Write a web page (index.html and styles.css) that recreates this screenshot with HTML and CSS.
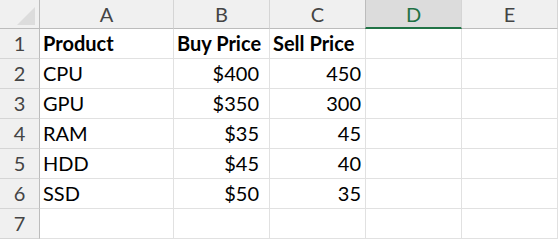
FILE: index.html
```html
<!DOCTYPE html>
<html lang="en">
<head>
  <meta charset="UTF-8">
  <title>Sheet1</title>
  <link rel="stylesheet" href="styles.css">
</head>
<body>
  <div class="sheet">
    <div class="corner"><span class="tri"></span></div>
    <div class="col-head">A</div>
    <div class="col-head">B</div>
    <div class="col-head">C</div>
    <div class="col-head selected">D</div>
    <div class="col-head">E</div>

    <div class="row-head">1</div>
    <div class="cell bold">Product</div>
    <div class="cell bold">Buy Price</div>
    <div class="cell bold">Sell Price</div>
    <div class="cell"></div>
    <div class="cell"></div>

    <div class="row-head">2</div>
    <div class="cell">CPU</div>
    <div class="cell money">$400</div>
    <div class="cell num">450</div>
    <div class="cell"></div>
    <div class="cell"></div>

    <div class="row-head">3</div>
    <div class="cell">GPU</div>
    <div class="cell money">$350</div>
    <div class="cell num">300</div>
    <div class="cell"></div>
    <div class="cell"></div>

    <div class="row-head">4</div>
    <div class="cell">RAM</div>
    <div class="cell money">$35</div>
    <div class="cell num">45</div>
    <div class="cell"></div>
    <div class="cell"></div>

    <div class="row-head">5</div>
    <div class="cell">HDD</div>
    <div class="cell money">$45</div>
    <div class="cell num">40</div>
    <div class="cell"></div>
    <div class="cell"></div>

    <div class="row-head">6</div>
    <div class="cell">SSD</div>
    <div class="cell money">$50</div>
    <div class="cell num">35</div>
    <div class="cell"></div>
    <div class="cell"></div>

    <div class="row-head">7</div>
    <div class="cell"></div>
    <div class="cell"></div>
    <div class="cell"></div>
    <div class="cell"></div>
    <div class="cell"></div>
  </div>
</body>
</html>
```

FILE: styles.css
```css
body {
  margin: 0;
  background-color: #ffffff;
  font-family: Lato, "Open Sans", sans-serif;
  font-size: 20px;
  color: #000;
}

.sheet {
  display: grid;
  grid-template-columns: 40px 134px 96px 96px 96px 96px;
  grid-template-rows: 29px repeat(7, 30px);
}

.sheet > div {
  box-sizing: border-box;
}

.corner {
  position: relative;
  background-color: #f0f0f0;
  border-right: 1px solid #bcbcbc;
  border-bottom: 1px solid #bcbcbc;
}

.corner .tri {
  position: absolute;
  right: 4px;
  bottom: 3px;
  width: 0;
  height: 0;
  border-left: 18px solid transparent;
  border-bottom: 18px solid #dcdcdc;
}

.col-head {
  display: flex;
  align-items: center;
  justify-content: center;
  background-color: #f0f0f0;
  color: #444;
  border-right: 1px solid #d5d5d5;
  border-bottom: 1px solid #bcbcbc;
}

.col-head.selected {
  background-color: #dcdcdc;
  color: #1e7145;
  border-bottom: 2px solid #217346;
  border-left: 1px solid #bcbcbc;
  margin-left: -1px;
}

.row-head {
  display: flex;
  align-items: flex-end;
  justify-content: center;
  padding-bottom: 3px;
  background-color: #f0f0f0;
  color: #444;
  border-right: 1px solid #bcbcbc;
  border-bottom: 1px solid #d5d5d5;
}

.cell {
  display: flex;
  align-items: flex-end;
  padding: 0 4px 3px 3px;
  white-space: nowrap;
  border-right: 1px solid #e1e1e1;
  border-bottom: 1px solid #e1e1e1;
}

.bold {
  font-weight: bold;
}

.num {
  justify-content: flex-end;
}

.money {
  justify-content: flex-end;
  padding-right: 10px;
}
```
